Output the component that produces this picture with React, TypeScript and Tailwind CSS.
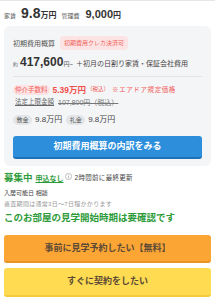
import React from "react";

const InfoIcon = () => (
  <svg width="7" height="7" viewBox="0 0 16 16" className="ml-[1px] mr-[3px] self-start mt-[1px]">
    <circle cx="8" cy="8" r="7" fill="none" stroke="#9a9a9a" strokeWidth="1.4" />
    <rect x="7.2" y="7" width="1.6" height="5" fill="#9a9a9a" />
    <rect x="7.2" y="4" width="1.6" height="1.6" fill="#9a9a9a" />
  </svg>
);

const Pill = ({ children, className }: { children: React.ReactNode; className?: string }) => (
  <span className={`inline-flex items-center h-[10px] rounded-full leading-none ${className}`}>{children}</span>
);

export default function App() {
  return (
    <div
      className="w-[215px] h-[300px] bg-white border-t border-[#e6e6e6] text-[#333] overflow-hidden"
      style={{ fontFamily: '"Liberation Sans", "Noto Sans CJK JP", sans-serif' }}
    >
      {/* rent row */}
      <div className="flex items-baseline px-1 pt-[5px] h-[21px] leading-none">
        <span className="text-[6px] text-[#555]">家賃</span>
        <span className="ml-[5px] text-[14px] font-bold">9.8</span>
        <span className="text-[8px] font-bold">万円</span>
        <span className="ml-[5px] text-[6px] text-[#555]">管理費</span>
        <span className="ml-[6px] text-[11px] font-bold">9,000</span>
        <span className="text-[8px] font-bold">円</span>
      </div>

      {/* cost card */}
      <div className="mx-1 mt-[4px] rounded-md bg-[#f4f5f7] px-[9px] pt-[10px] pb-[7px]">
        <div className="flex items-center h-[14px]">
          <span className="text-[7px] text-[#555] leading-none">初期費用概算</span>
          <span className="ml-[5px] h-[14px] px-[4px] flex items-center rounded-sm bg-[#fde4e4] text-[6px] text-[#f1605a] leading-none">
            初期費用クレカ決済可
          </span>
        </div>

        <div className="flex items-baseline h-[14px] mt-[6px] leading-none">
          <span className="text-[5px] text-[#666]">約</span>
          <span className="ml-[2px] text-[12px] font-bold">417,600</span>
          <span className="text-[6px] text-[#555]">円~</span>
          <span className="ml-[3px] text-[7px] text-[#444]">＋初月の日割り家賃・保証会社費用</span>
        </div>

        <div className="mt-[6px] h-px bg-[#e3e4e7]" />

        <div className="flex items-center h-[10px] mt-[8px] leading-none">
          <Pill className="bg-[#fde3e3] px-[2px] text-[6.5px] text-[#f1605a]">仲介手数料</Pill>
          <span className="ml-[3px] text-[8.5px] font-bold text-[#f1504a]">5.39万円</span>
          <span className="ml-[1px] text-[5.5px] text-[#f1504a]">（税込）</span>
          <span className="ml-[3px] text-[6.5px] tracking-[0.6px] text-[#f1605a]">※エアドア規定価格</span>
        </div>

        <div className="flex items-center h-[10px] mt-[2px] pl-[2px] leading-none">
          <span className="text-[6.5px] text-[#666] underline">法定上限金額</span>
          <span className="ml-[4px] text-[7px] text-[#777] line-through">107,800円（税込）</span>
        </div>

        <div className="flex items-center h-[10px] mt-[8px] leading-none">
          <Pill className="bg-[#e3e5e8] px-[3.5px] text-[6px] text-[#555]">敷金</Pill>
          <span className="ml-[3px] text-[8px] text-[#444]">9.8万円</span>
          <Pill className="ml-[4px] bg-[#e3e5e8] px-[3.5px] text-[6px] text-[#555]">礼金</Pill>
          <span className="ml-[3px] text-[8px] text-[#444]">9.8万円</span>
        </div>

        <button className="mt-[11px] w-full h-[23px] rounded-[3px] bg-[#2d8fdc] border-b-2 border-[#1f70b6] flex items-center justify-center text-white text-[9px] font-bold leading-none">
          初期費用概算の内訳をみる
        </button>
      </div>

      {/* status */}
      <div className="px-1">
        <div className="flex items-center h-[12px] mt-[6px] leading-none">
          <span className="text-[9.5px] font-bold text-[#2e9b3a]">募集中</span>
          <span className="ml-[3px] text-[7px] font-bold text-[#2e9b3a] underline">申込なし</span>
          <InfoIcon />
          <span className="text-[6.5px] tracking-[0.3px] text-[#444]">2時間前に最終更新</span>
        </div>
        <div className="flex items-center h-[8px] mt-[5px] text-[6px] text-[#444] leading-none">
          入居可能日 相談
        </div>
        <div className="flex items-center h-[8px] mt-[3px] text-[6px] tracking-[0.3px] text-[#999] leading-none">
          審査期間は通常3日〜7日程かかります
        </div>
        <div className="flex items-center h-[12px] mt-[4px] text-[9.5px] font-bold text-[#2e9b3a] leading-none">
          このお部屋の見学開始時期は要確認です
        </div>

        <button className="mt-[11px] w-full h-[28px] rounded-[3px] bg-[#fba534] border-b-2 border-[#ea9222] flex items-center justify-center text-[9px] font-bold text-[#5c4a36] leading-none">
          事前に見学予約したい【無料】
        </button>
        <button className="mt-[5px] w-full h-[29px] rounded-[3px] bg-[#fedb50] border-b-2 border-[#f2ca3c] flex items-center justify-center text-[9px] font-bold text-[#5c4a36] leading-none">
          すぐに契約をしたい
        </button>
      </div>
    </div>
  );
}
